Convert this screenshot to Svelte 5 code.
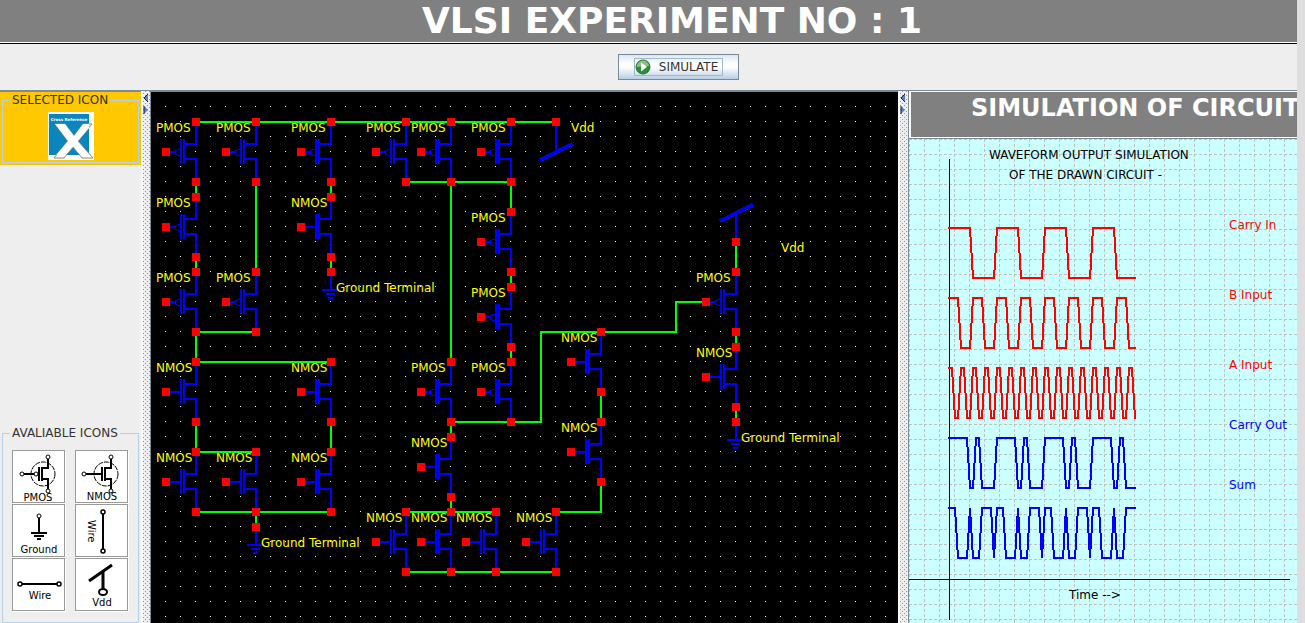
<script>
  const UNIT = 15;

  // Device positions are the grid cell of the upper terminal.
  const pmos = [
    [3, 2], [7, 2], [12, 2], [17, 2], [20, 2], [24, 2],
    [3, 7], [3, 12], [7, 12], [24, 8], [24, 13], [20, 18], [24, 18], [39, 12]
  ];
  const nmos = [
    [12, 7], [3, 18], [12, 18], [3, 24], [7, 24], [12, 24], [30, 16],
    [30, 22], [20, 23], [17, 28], [20, 28], [23, 28], [27, 28], [39, 17]
  ];
  const transistors = [
    ...pmos.map(([x, y]) => ({ type: 'PMOS', x: x * UNIT, y: y * UNIT })),
    ...nmos.map(([x, y]) => ({ type: 'NMOS', x: x * UNIT, y: y * UNIT }))
  ];
  const grounds = [[12, 12], [7, 29], [39, 22]].map(([x, y]) => ({ x: x * UNIT, y: y * UNIT }));

  const wires = [
    [3, 2, 27, 2], [3, 6, 3, 7], [12, 6, 12, 7], [7, 6, 7, 12], [3, 11, 3, 12],
    [12, 11, 12, 12], [3, 16, 7, 16], [3, 16, 3, 18], [3, 18, 12, 18],
    [3, 22, 3, 24], [12, 22, 12, 24], [3, 24, 7, 24], [3, 28, 12, 28],
    [7, 28, 7, 29], [17, 6, 24, 6], [20, 6, 20, 18], [24, 6, 24, 8],
    [24, 12, 24, 13], [24, 17, 24, 18],
    [20, 22, 26, 22, 26, 16, 35, 16, 35, 14, 37, 14],
    [20, 22, 20, 23], [30, 20, 30, 22], [30, 26, 30, 28, 27, 28],
    [20, 27, 20, 28], [17, 28, 23, 28], [17, 32, 27, 32],
    [39, 10, 39, 12], [39, 16, 39, 17], [39, 21, 39, 22]
  ].map((w) => w.map((n) => n * UNIT).join(' '));

  const terminals = [
    ...transistors.flatMap(({ x, y }) => [[x, y], [x - 30, y + 30], [x, y + 60]]),
    ...grounds.map(({ x, y }) => [x, y]),
    [27 * UNIT, 2 * UNIT],
    [39 * UNIT, 10 * UNIT]
  ];

  // Each edge starts a 3px ramp; offsets are measured from the time axis.
  function wave(top, period, edges) {
    const end = 186;
    const low = top + 50;
    let high = true;
    let d = `M39 ${top}`;
    for (let base = 0; base < end; base += period) {
      for (const e of edges) {
        const t = base + e;
        if (t >= end) break;
        d += ` L${40 + t} ${high ? top : low}`;
        high = !high;
        d += ` L${43 + t} ${high ? top : low}`;
      }
    }
    return `${d} L${41 + end} ${high ? top : low}`;
  }

  const signals = [
    { name: 'Carry In', color: '#ff0000', y: 90, d: wave(89, 48, [21, 45]) },
    { name: 'B Input', color: '#ff0000', y: 160, d: wave(159, 24, [9, 21]) },
    { name: 'A Input', color: '#ff0000', y: 230, d: wave(229, 12, [3, 9]) },
    { name: 'Carry Out', color: '#0000ff', y: 290, d: wave(299, 48, [18, 24, 30, 45]) },
    { name: 'Sum', color: '#0000ff', y: 350, d: wave(369, 48, [6, 18, 21, 30, 42, 45]) }
  ];
</script>

{#snippet mos(kind)}
  <g fill="none" stroke="#000">
    <circle cx="30" cy="23" r="12" stroke-dasharray="5 1" />
    <path d="M35 8V17H29M29 28H35V38" stroke-width="2" />
    <path d="M26 16V30M29 16V30" stroke-width="2" />
    <circle cx="35" cy="6" r="2" fill="#fff" />
    <circle cx="35" cy="40" r="2" fill="#fff" />
    {#if kind === 'PMOS'}
      <path d="M11 23H22" stroke-width="2" />
      <circle cx="23" cy="23" r="2" fill="#fff" />
      <circle cx="9" cy="23" r="2" fill="#fff" />
    {:else}
      <path d="M10 23H25" stroke-width="2" />
      <circle cx="8" cy="23" r="2" fill="#fff" />
    {/if}
  </g>
  <text x={kind === 'PMOS' ? 25 : 26} y={kind === 'PMOS' ? 50 : 49} text-anchor="middle">{kind}</text>
{/snippet}

{#snippet splitter()}
  <svg class="arrows" width="6" height="24" aria-hidden="true">
    <path d="M5 1V9L1 5Z" fill="#5b7fd0" /><path d="M5 1L1 5L5 9" fill="none" stroke="#223" />
    <path d="M1 13V21L5 17Z" fill="#5b7fd0" /><path d="M1 13V21" stroke="#223" />
  </svg>
{/snippet}

<div class="app">
  <div class="page">
    <header><h1>VLSI EXPERIMENT NO : 1</h1></header>

    <div class="toolbar">
      <button class="simulate" type="button">
        <span class="focus">
          <svg width="16" height="16" viewBox="0 0 16 16" aria-hidden="true">
            <circle cx="8" cy="8" r="7" fill="#2f8a3c" stroke="#277334" />
            <path d="M2 8A6 6 0 0 1 14 7Q8 7 2 8Z" fill="#8cc27c" />
            <path d="M6 3.500L12 8L6 12.500Z" fill="#fff" />
          </svg>
          SIMULATE
        </span>
      </button>
    </div>

    <main>
      <aside>
        <div class="selected">
          <fieldset>
            <legend>SELECTED ICON</legend>
            <svg width="46" height="48" viewBox="0 0 46 48" role="img" aria-label="Cross Reference">
              <rect width="46" height="48" fill="#fff" />
              <rect x="1" y="2" width="40" height="41" fill="#0a86bd" />
              <text class="tiny" x="21" y="9" text-anchor="middle">Cross Reference</text>
              <path d="M7 12H17L26 24L35 12H44L30 29L45 46H34L25 35L16 46H6L20 29Z" fill="#fff" stroke="#888" stroke-width="1" />
              <path d="M7 12H17L26 24L35 12H41V16L30 29L25 35L16 43H8L20 29Z" fill="#fff" />
            </svg>
          </fieldset>
        </div>

        <fieldset class="available">
          <legend>AVALIABLE ICONS</legend>
          <div class="palette">
            <button type="button" aria-label="PMOS"><svg viewBox="0 0 51 51">{@render mos('PMOS')}</svg></button>
            <button type="button" aria-label="NMOS"><svg viewBox="0 0 51 51">{@render mos('NMOS')}</svg></button>
            <button type="button" aria-label="Ground">
              <svg viewBox="0 0 51 51">
                <path d="M26 12V28M18 28H34M21 31H31M24 34H28" stroke="#000" stroke-width="2" />
                <circle cx="26" cy="11" r="2" fill="#fff" stroke="#000" />
                <text x="26" y="48" text-anchor="middle">Ground</text>
              </svg>
            </button>
            <button type="button" aria-label="Vertical wire">
              <svg viewBox="0 0 51 51">
                <path d="M27 8V46" stroke="#000" stroke-width="2" />
                <circle cx="27" cy="7" r="2" fill="#fff" stroke="#000" stroke-width="1.500" />
                <circle cx="27" cy="46" r="2" fill="#fff" stroke="#000" stroke-width="1.500" />
                <text transform="translate(12 15) rotate(90)">Wire</text>
              </svg>
            </button>
            <button type="button" aria-label="Horizontal wire">
              <svg viewBox="0 0 51 51">
                <path d="M8 25H46" stroke="#000" stroke-width="2" />
                <circle cx="7" cy="25" r="2" fill="#fff" stroke="#000" stroke-width="1.500" />
                <circle cx="46" cy="25" r="2" fill="#fff" stroke="#000" stroke-width="1.500" />
                <text x="27" y="40" text-anchor="middle">Wire</text>
              </svg>
            </button>
            <button type="button" aria-label="Vdd">
              <svg viewBox="0 0 51 51">
                <path d="M13 22L36 6M27 13V30" stroke="#000" stroke-width="3" />
                <ellipse cx="27" cy="33" rx="4" ry="3" fill="#fff" stroke="#000" stroke-width="2" />
                <text x="26" y="47" text-anchor="middle">Vdd</text>
              </svg>
            </button>
          </div>
        </fieldset>
      </aside>

      <div class="divider">{@render splitter()}</div>

      <section class="circuit">
        <svg width="100%" height="100%" role="img" aria-label="Circuit">
          <defs>
            <pattern id="dots" width="15" height="15" patternUnits="userSpaceOnUse">
              <rect x="14" y="14" width="1" height="1" fill="#fff" />
            </pattern>
          </defs>
          <rect width="100%" height="100%" fill="url(#dots)" />
          <g fill="none" stroke="#00ff00" stroke-width="2">
            {#each wires as w}<polyline points={w} />{/each}
          </g>
          <g fill="none" stroke="#0000ff" stroke-width="2" shape-rendering="crispEdges">
            {#each transistors as t}
              <g transform="translate({t.x} {t.y})">
                <path d="M0 0V22H-12M-12 37H0V60M-15 17V42M-12 17V42" />
                {#if t.type === 'PMOS'}
                  <path d="M-30 30H-20" />
                  <path d="M-16 27.500H-18L-20.500 29V32L-18 33.500H-16" stroke-width="1" />
                {:else}
                  <path d="M-30 30H-16" />
                {/if}
              </g>
            {/each}
            {#each grounds as g}
              <path transform="translate({g.x} {g.y})" d="M0 0V18M-9 18H8M-5 22H4M-3 26H2" />
            {/each}
            <path d="M405 30V60M585 150V120" />
            <path d="M389 68L422 52M569 129L602 113" stroke-width="4" />
          </g>
          <g fill="#ff0000">
            {#each terminals as [x, y]}<rect x={x - 4} y={y - 4} width="8" height="8" />{/each}
          </g>
          <g fill="#ffff00">
            {#each transistors as t}<text x={t.x - 40} y={t.y + 10}>{t.type}</text>{/each}
            {#each grounds as g}<text x={g.x + 5} y={g.y + 20}>Ground Terminal</text>{/each}
            <text x="420" y="40">Vdd</text>
            <text x="630" y="160">Vdd</text>
          </g>
        </svg>
      </section>

      <div class="divider">{@render splitter()}</div>

      <section class="output">
        <h2>SIMULATION OF CIRCUIT</h2>
        <div class="plot">
          <svg width="100%" height="100%" role="img" aria-label="Waveforms">
            <defs>
              <pattern id="grid" width="15" height="15" patternUnits="userSpaceOnUse">
                <path d="M0 0.500H15M0.500 0V15" stroke="#c0c0c0" stroke-dasharray="3 2" />
              </pattern>
            </defs>
            <rect width="100%" height="100%" fill="url(#grid)" />
            <path d="M40.500 20V481M0 440.500H381" stroke="#000" />
            <g fill="#000">
              <text x="80" y="20">WAVEFORM OUTPUT SIMULATION</text>
              <text x="100" y="40">OF THE DRAWN CIRCUIT -</text>
              <text x="160" y="460">Time --&gt;</text>
            </g>
            {#each signals as s}
              <path d={s.d} fill="none" stroke={s.color} stroke-width="2" shape-rendering="crispEdges" />
              <text x="320" y={s.y} fill={s.color}>{s.name}</text>
            {/each}
          </svg>
        </div>
      </section>
    </main>
  </div>
</div>

<style>
  :global(body) {
    margin: 0;
    background: #eee;
  }
  .app {
    height: 100vh;
    padding-right: 8px;
    background: #dedede;
    font: 12px/14px "DejaVu Sans", sans-serif;
    color: #333;
    overflow: hidden;
    box-sizing: border-box;
  }
  .page {
    height: 100%;
    display: grid;
    grid-template-rows: auto auto minmax(0, 1fr);
    background: #eee;
  }
  header {
    background: #808080;
    border-bottom: 1px solid #000;
    box-shadow: inset 0 -1px #fff;
    padding: 1px 0 2px 47px;
    text-align: center;
    color: #fff;
  }
  h1 {
    margin: 0;
    font-size: 36px;
    line-height: 40px;
    white-space: nowrap;
  }
  .toolbar {
    display: flex;
    justify-content: center;
    padding: 10px 0 10px 60px;
  }
  .simulate {
    padding: 3px 15px;
    border: 1px solid #7a8a99;
    background: linear-gradient(#dde8f3, #fff 40%, #fff 50%, #b8cfe5);
    font: inherit;
    color: #333;
  }
  .focus {
    display: flex;
    align-items: center;
    gap: 8px;
    height: 16px;
    padding: 0 4px 0 0;
    border: 1px solid #a3b8cc;
  }
  main {
    display: grid;
    grid-template-columns: 141px 9px minmax(0, 1fr) 10px 389px;
    grid-template-rows: minmax(0, 1fr);
    border-top: 1px solid #7a8a99;
  }
  aside {
    display: flex;
    flex-direction: column;
    justify-content: space-between;
    border-top: 1px solid #7a8a99;
  }
  .selected {
    background: #ffc800;
    padding: 1px 2px 2px;
  }
  fieldset {
    margin: 0;
    min-width: 0;
    padding: 5px 7px 2px;
    border: 1px solid #b8cfe5;
  }
  .selected svg {
    display: block;
    margin: 0 auto;
  }
  legend {
    padding: 0 2px;
  }
  .available {
    margin: 0 2px;
    padding: 10px 7px 11px;
  }
  .palette {
    display: grid;
    grid-template-columns: 53px 53px;
    padding-left: 2px;
    gap: 1px 10px;
  }
  .palette button {
    padding: 0;
    border: 1px solid #999;
    background: #fff;
    box-shadow: 1px 1px #fff;
    font: inherit;
    color: #000;
  }
  .palette svg {
    display: block;
    width: 51px;
    height: 51px;
    font-size: 10px;
  }
  .tiny {
    font-size: 4px;
    font-weight: bold;
    fill: #fff;
  }
  .divider {
    padding-left: 1px;
    border-left: 1px solid #fff;
    background:
      linear-gradient(90deg, #fff 1px, transparent 1px),
      conic-gradient(from 270deg at 1px 1px, #8a97a5 90deg, transparent 0) 3px 0 / 4px 4px,
      conic-gradient(from 270deg at 1px 1px, #8a97a5 90deg, transparent 0) 1px 2px / 4px 4px,
      #eee;
  }
  .arrows {
    display: block;
    margin-top: 2px;
  }
  .circuit {
    border: 1px solid #7a8a99;
    border-width: 1px 0 0 1px;
    background: #000;
    min-width: 0;
  }
  .circuit svg,
  .plot svg {
    display: block;
  }
  .output {
    display: grid;
    grid-template-rows: auto minmax(0, 1fr);
    min-width: 0;
    border-left: 1px solid #7a8a99;
  }
  h2 {
    margin: 0;
    padding: 2px 0 14px 60px;
    border: 2px solid #fff;
    border-width: 1px 0 1px 2px;
    background: #808080;
    color: #fff;
    font-size: 24px;
    line-height: 29px;
    white-space: nowrap;
    overflow: hidden;
  }
  .plot {
    border-top: 1px solid #7a8a99;
    background: #ccffff;
  }
</style>
